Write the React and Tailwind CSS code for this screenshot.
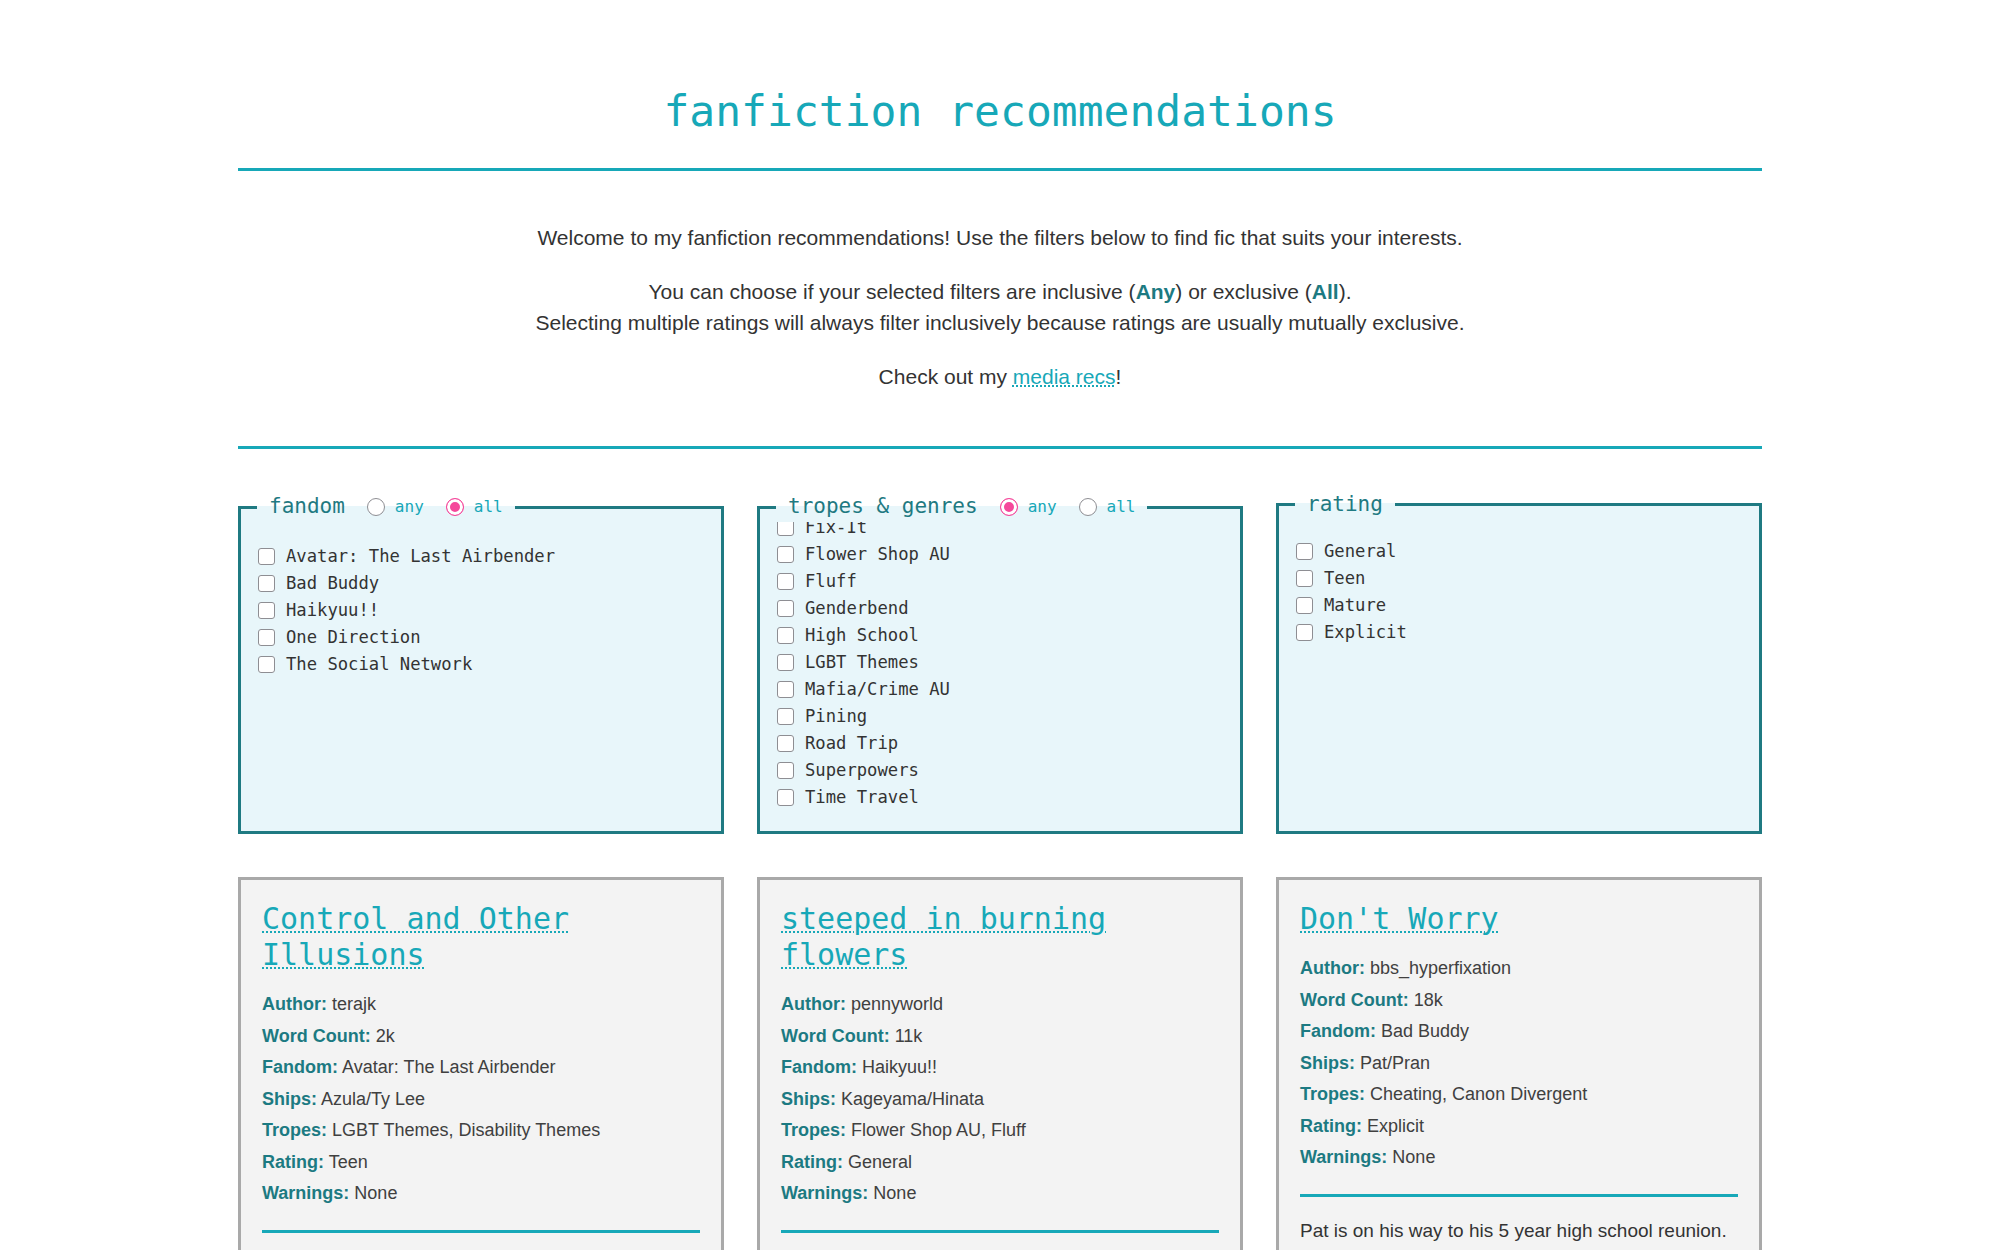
const fandoms = ['Avatar: The Last Airbender', 'Bad Buddy', 'Haikyuu!!', 'One Direction', 'The Social Network'];

const tropes = [
  'Canon Divergent',
  'Cheating',
  'Disability Themes',
  'Fix-It',
  'Flower Shop AU',
  'Fluff',
  'Genderbend',
  'High School',
  'LGBT Themes',
  'Mafia/Crime AU',
  'Pining',
  'Road Trip',
  'Superpowers',
  'Time Travel',
];

const ratings = ['General', 'Teen', 'Mature', 'Explicit'];

const fics = [
  {
    title: 'Control and Other Illusions',
    author: 'terajk',
    words: '2k',
    fandom: 'Avatar: The Last Airbender',
    ships: 'Azula/Ty Lee',
    tropes: 'LGBT Themes, Disability Themes',
    rating: 'Teen',
    warnings: 'None',
    summary: 'Azula learns to live with what she cannot control, and Ty Lee stays.',
  },
  {
    title: 'steeped in burning flowers',
    author: 'pennyworld',
    words: '11k',
    fandom: 'Haikyuu!!',
    ships: 'Kageyama/Hinata',
    tropes: 'Flower Shop AU, Fluff',
    rating: 'General',
    warnings: 'None',
    summary: 'Hinata works at a flower shop. Kageyama keeps coming back for more flowers.',
  },
  {
    title: "Don't Worry",
    author: 'bbs_hyperfixation',
    words: '18k',
    fandom: 'Bad Buddy',
    ships: 'Pat/Pran',
    tropes: 'Cheating, Canon Divergent',
    rating: 'Explicit',
    warnings: 'None',
    summary: "Pat is on his way to his 5 year high school reunion. He isn't sure who he will see there.",
  },
];

function Check({ label }) {
  return (
    <label className="flex items-center h-[27px] gap-[11px] text-[17.2px] text-[#333] whitespace-nowrap">
      <input
        type="checkbox"
        className="appearance-none shrink-0 w-[17px] h-[17px] bg-white border border-[#8e8e93] rounded-[3px] checked:bg-[#f5479b] checked:border-[#f5479b]"
      />
      <span>{label}</span>
    </label>
  );
}

function Radio({ name, label, checked }) {
  return (
    <label className="flex items-center gap-[10px] ml-[22px] text-[16px] text-[#17a8b8]">
      <input
        type="radio"
        name={name}
        defaultChecked={checked}
        className="appearance-none shrink-0 w-[18px] h-[18px] rounded-full bg-white border-[1.5px] border-[#8e8e93] checked:border-[#f5479b] checked:bg-[#f5479b] checked:shadow-[inset_0_0_0_3px_#fff]"
      />
      {label}
    </label>
  );
}

function Filter({ title, items, name, mode, toBottom }) {
  return (
    <fieldset className="min-w-0 border-[3px] border-[#1f7a82] bg-[#e8f6fa]">
      <legend className="ml-4 px-3">
        {name ? (
          <div className="flex items-center h-[30px]">
            <span className="text-[21px] text-[#1f7a82]">{title}</span>
            <Radio name={name} label="any" checked={mode === 'any'} />
            <Radio name={name} label="all" checked={mode === 'all'} />
          </div>
        ) : (
          <div className="flex items-center h-[25px]">
            <span className="text-[21px] text-[#1f7a82]">{title}</span>
          </div>
        )}
      </legend>
      <div
        ref={(el) => {
          if (el && toBottom) el.scrollTop = el.scrollHeight;
        }}
        className="h-[309px] overflow-y-auto [scrollbar-width:none] pt-[21px] pb-5 pl-[17px] pr-4"
      >
        {items.map((item) => (
          <Check key={item} label={item} />
        ))}
      </div>
    </fieldset>
  );
}

function Card({ fic }) {
  const rows = [
    ['Author', fic.author],
    ['Word Count', fic.words],
    ['Fandom', fic.fandom],
    ['Ships', fic.ships],
    ['Tropes', fic.tropes],
    ['Rating', fic.rating],
    ['Warnings', fic.warnings],
  ];
  return (
    <div className="border-[3px] border-[#a9a9a9] bg-[#f3f3f3] px-[21px] pt-[21px] pb-[21px]">
      <h2 className="font-['DejaVu_Sans_Mono','Liberation_Mono',monospace] text-[30px] leading-[36px] font-normal">
        <a href="#" className="text-[#17a8b8] underline decoration-dotted decoration-2 underline-offset-2">
          {fic.title}
        </a>
      </h2>
      <div className="mt-4 text-[18px] leading-[31.5px] text-[#404040]">
        {rows.map(([k, v]) => (
          <div key={k}>
            <b className="font-bold text-[#1c7a82]">{k}:</b> {v}
          </div>
        ))}
      </div>
      <div className="mt-5 h-[3px] bg-[#17a8b8]" />
      <p className="mt-[18px] text-[19px] leading-[31.5px] text-[#333]">{fic.summary}</p>
    </div>
  );
}

export default function App() {
  return (
    <div className="min-h-screen bg-white font-['Liberation_Sans',Arial,sans-serif]">
      <div className="w-[1524px] mx-auto pt-[85px] pb-20">
        <h1 className="text-center font-['DejaVu_Sans_Mono','Liberation_Mono',monospace] text-[43px] leading-[52px] font-normal text-[#17a8b8]">
          fanfiction recommendations
        </h1>
        <div className="mt-[31px] h-[3px] bg-[#17a8b8]" />

        <div className="text-center text-[21px] leading-[31.5px] text-[#333]">
          <p className="mt-[51px]">
            Welcome to my fanfiction recommendations! Use the filters below to find fic that suits your interests.
          </p>
          <p className="mt-[22px]">
            You can choose if your selected filters are inclusive (<b className="text-[#1c7a82]">Any</b>) or exclusive (
            <b className="text-[#1c7a82]">All</b>).
            <br />
            Selecting multiple ratings will always filter inclusively because ratings are usually mutually exclusive.
          </p>
          <p className="mt-[22px]">
            Check out my{' '}
            <a href="#" className="text-[#17a8b8] underline decoration-dotted decoration-2 underline-offset-2">
              media recs
            </a>
            !
          </p>
        </div>
        <div className="mt-[54px] h-[3px] bg-[#17a8b8]" />

        {/* filters */}
        <div className="mt-[43px] grid grid-cols-3 gap-x-[33px] font-['DejaVu_Sans_Mono','Liberation_Mono',monospace]">
          <Filter title="fandom" items={fandoms} name="fandom-mode" mode="all" />
          <Filter title="tropes & genres" items={tropes} name="trope-mode" mode="any" toBottom />
          <Filter title="rating" items={ratings} />
        </div>

        {/* fic cards */}
        <div className="mt-[43px] grid grid-cols-3 gap-x-[33px] gap-y-[40px]">
          {fics.map((fic) => (
            <Card key={fic.title} fic={fic} />
          ))}
        </div>
      </div>
    </div>
  );
}
